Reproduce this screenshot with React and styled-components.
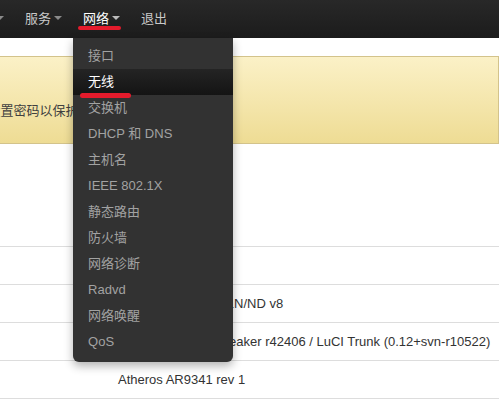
import React from "react";
import styled, { createGlobalStyle } from "styled-components";

const GlobalStyle = createGlobalStyle`
  html, body {
    margin: 0;
    padding: 0;
    background: #fff;
    overflow: hidden;
  }
  body {
    font-family: "Liberation Sans", "Noto Sans CJK SC", sans-serif;
    font-size: 13px;
    color: #404040;
  }
`;

/* the page is shown scrolled sideways: its left part lies out of view */
const Page = styled.div`
  margin-left: -193px;
  width: calc(100% + 193px);
`;

const Navbar = styled.header`
  position: relative;
  z-index: 10;
  display: flex;
  height: 38px;
  background: linear-gradient(#282828, #1c1c1c);
`;

const Brand = styled.a`
  box-sizing: border-box;
  width: 92px;
  padding-left: 20px;
  line-height: 38px;
  font-size: 18px;
  color: #fff;
  text-decoration: none;
`;

const NavList = styled.ul`
  display: flex;
  margin: 0;
  padding: 0;
  list-style: none;
`;

const NavItem = styled.li`
  position: relative;
  box-sizing: border-box;
  display: flex;
  align-items: center;
  height: 38px;
  padding: 0 11px 3px 10px;
  color: ${(p) => (p.$active ? "#fff" : "#c9c9c9")};
  white-space: nowrap;
`;

const Caret = styled.span`
  display: inline-block;
  width: 0;
  height: 0;
  margin: 1px 0 0 3px;
  border-left: 4px solid transparent;
  border-right: 4px solid transparent;
  border-top: 4px solid ${(p) => (p.$active ? "#bbb" : "#8a8a8a")};
`;

/* red hand-drawn highlight laid over the screenshot */
const Mark = styled.span`
  position: absolute;
  left: ${(p) => p.$left}px;
  top: ${(p) => p.$top}px;
  width: ${(p) => p.$width}px;
  height: ${(p) => p.$height}px;
  border-radius: 3px;
  background: #e41b2c;
  pointer-events: none;
  z-index: 3;
`;

const Dropdown = styled.ul`
  position: absolute;
  top: 100%;
  left: 0;
  width: 160px;
  margin: 0;
  padding: 5px 0 7px;
  list-style: none;
  background: #323232;
  border-radius: 0 0 6px 6px;
  box-shadow: 0 4px 10px rgba(0, 0, 0, 0.3);
`;

const DropItem = styled.li`
  position: relative;
  height: 26px;
  line-height: 26px;
  padding: 0 15px;
  color: ${(p) => (p.$active ? "#fff" : "#a2a2a2")};
  background: ${(p) =>
    p.$active ? "linear-gradient(#242424, #141414)" : "transparent"};
  white-space: nowrap;
`;

const Main = styled.main`
  padding-top: 18px;
`;

const Alert = styled.div`
  border: 1px solid #d3c38b;
  background: linear-gradient(#fbf1c7, #eedc94);
  padding: 14px 14px 23px;
  color: #404040;
`;

const AlertTitle = styled.h4`
  margin: 0 0 9px;
  font-size: 13px;
  line-height: 22px;
`;

const AlertText = styled.p`
  margin: 0;
  line-height: 18px;
  white-space: nowrap;
`;

const PageTitle = styled.h2`
  margin: 16px 0 10px;
  padding-left: 20px;
  font-size: 20px;
  line-height: 30px;
  font-weight: normal;
`;

const Legend = styled.div`
  margin: 0 0 20px;
  padding-left: 20px;
  font-size: 16px;
  line-height: 26px;
`;

const Table = styled.div`
  display: flex;
  flex-direction: column;
`;

const Row = styled.div`
  box-sizing: border-box;
  display: grid;
  grid-template-columns: 311px 1fr;
  align-items: center;
  height: 38px;
  border-top: 1px solid #dddddd;
  color: #333;
`;

const Label = styled.div`
  padding-left: 20px;
`;

const Value = styled.div`
  white-space: nowrap;
`;

const navItems = [
  { label: "状态", caret: true },
  { label: "系统", caret: true },
  { label: "服务", caret: true },
  { label: "网络", caret: true, active: true },
  { label: "退出", caret: false },
];

const menu = [
  "接口",
  "无线",
  "交换机",
  "DHCP 和 DNS",
  "主机名",
  "IEEE 802.1X",
  "静态路由",
  "防火墙",
  "网络诊断",
  "Radvd",
  "网络唤醒",
  "QoS",
];

const rows = [
  ["主机名", "OpenWrt"],
  ["型号", "TP-LINK TL-WR841N/ND v8"],
  ["固件版本", "OpenWrt Barrier Breaker r42406 / LuCI Trunk (0.12+svn-r10522)"],
  ["系统", "Atheros AR9341 rev 1"],
  ["内核版本", "3.10.49"],
];

export default function App() {
  return (
    <>
      <GlobalStyle />
      <Page>
        <Navbar>
          <Brand>OpenWrt</Brand>
          <NavList>
            {navItems.map((it) => (
              <NavItem key={it.label} $active={it.active}>
                {it.label}
                {it.caret && <Caret $active={it.active} />}
                {it.active && (
                  <>
                    <Mark $left={5} $top={26} $width={43} $height={4} />
                    <Dropdown>
                      {menu.map((m) => (
                        <DropItem key={m} $active={m === "无线"}>
                          {m}
                          {m === "无线" && (
                            <Mark $left={7} $top={24} $width={51} $height={5} />
                          )}
                        </DropItem>
                      ))}
                    </Dropdown>
                  </>
                )}
              </NavItem>
            ))}
          </NavList>
        </Navbar>
        <Main>
          <Alert>
            <AlertTitle>没有设置密码！</AlertTitle>
            <AlertText>尚未设置密码。请为root用户设置密码以保护主机并开启SSH。</AlertText>
          </Alert>
          <PageTitle>状态</PageTitle>
          <Legend>系统</Legend>
          <Table>
            {rows.map(([k, v]) => (
              <Row key={k}>
                <Label>{k}</Label>
                <Value>{v}</Value>
              </Row>
            ))}
          </Table>
        </Main>
      </Page>
    </>
  );
}
